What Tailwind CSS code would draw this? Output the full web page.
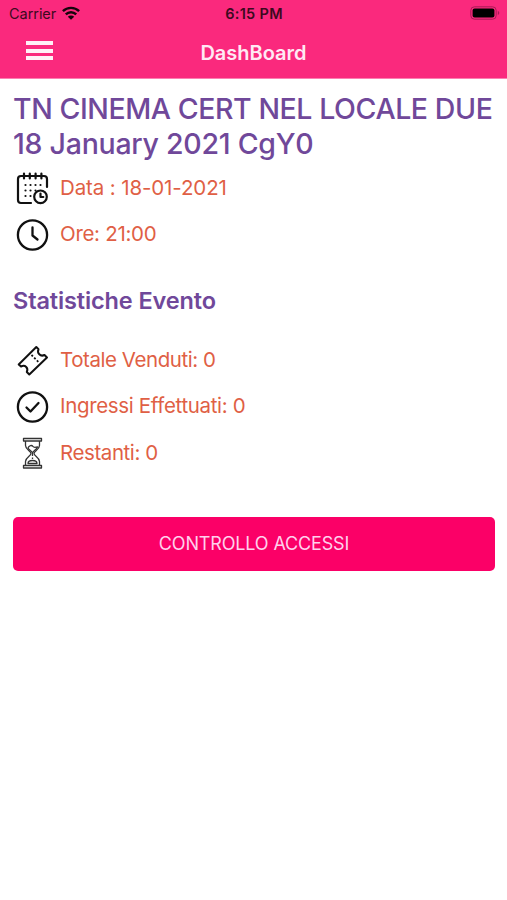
<!DOCTYPE html>
<html lang="it">
<head>
    <meta charset="UTF-8">
    <meta name="viewport" content="width=device-width, initial-scale=1.0">
    <title>DashBoard</title>
    <script src="https://cdn.jsdelivr.net/npm/@tailwindcss/browser@4"></script>
</head>
<body class="bg-white font-['Inter','Liberation_Sans',sans-serif] overflow-hidden">
    <header class="h-[79px] bg-[#fa297d] border-b border-[#fc7fb1]">
        <!-- Status bar -->
        <div class="h-[27px] grid grid-cols-3 items-center pl-[9px] pr-[7px] text-[#3c0a20]">
            <div class="flex items-center gap-1.5">
                <span class="text-[14.5px] tracking-[-0.05px]">Carrier</span>
                <svg class="w-[18px] h-[14px] -mt-0.5" viewBox="0 0 18 14" fill="none" stroke="#16040c" stroke-width="2.4">
                    <path d="M0.9 5.2a11.5 11.5 0 0 1 16.2 0M3.8 8.4a7.3 7.3 0 0 1 10.4 0" />
                    <path d="M9 13.8L5.8 10.8a4.6 4.6 0 0 1 6.4 0z" fill="#16040c" stroke="none" />
                </svg>
            </div>
            <span class="text-center text-[14.5px] tracking-[0.3px] font-semibold -ml-px">6:15 PM</span>
            <svg class="justify-self-end w-[30px] h-[14px] -mt-px" viewBox="0 0 30 14">
                <rect x="0.8" y="0.8" width="25.4" height="12.4" rx="3.6" fill="none" stroke="#a81b56" />
                <rect x="2.6" y="2.6" width="21.8" height="8.8" rx="2" fill="#000" />
                <path d="M27.8 4.8q3 2.2 0 4.4z" fill="#a81b56" />
            </svg>
        </div>
        <div class="h-[51px] grid grid-cols-[60px_1fr_60px] items-center">
            <button class="ml-[26px] w-[27px] flex flex-col gap-[3.5px] -mt-1">
                <span class="h-1 bg-[#fff0f7]"></span>
                <span class="h-1 bg-[#fff0f7]"></span>
                <span class="h-1 bg-[#fff0f7]"></span>
            </button>
            <h1 class="text-center text-[20px] font-semibold text-[#ffe9f4]">DashBoard</h1>
        </div>
    </header>

    <main class="px-[13px] pt-3">
        <h2 class="text-[28.5px] leading-[35px] font-medium text-[#70489a] whitespace-nowrap">
            <span class="block tracking-[-0.42px]">TN CINEMA CERT NEL LOCALE DUE</span>
            <span class="block tracking-[-0.26px]">18 January 2021 CgY0</span>
        </h2>

        <ul class="mt-1 text-[20.5px] text-[#e05f45]">
            <li class="h-[46.5px] flex items-center gap-[11px]">
                <svg class="w-9 h-9" viewBox="0 0 36 36" fill="none" stroke="#111" stroke-width="2.2" stroke-linecap="round" stroke-linejoin="round">
                    <path d="M18 33H8a3 3 0 0 1-3-3V9a3 3 0 0 1 3-3h23a3 3 0 0 1 3 3v8M11 3.500v5M16.800 3.500v5M22.600 3.500v5M28.400 3.500v5" />
                    <path d="M12.500 15h.01M17.500 15h.01M22.500 15h.01M27.500 15h.01M12.500 20.500h.01M17.500 20.500h.01M22.500 20.500h.01M12.500 26h.01M17.500 26h.01" />
                    <circle cx="27.500" cy="26.800" r="6.300" />
                    <path d="M27.500 23.500V27h2.800" />
                </svg>
                <span class="tracking-[-0.12px]">Data : 18-01-2021</span>
            </li>
            <li class="h-[46.5px] flex items-center gap-[11px]">
                <svg class="w-9 h-9" viewBox="0 0 36 36" fill="none" stroke="#111" stroke-width="2.3" stroke-linecap="round" stroke-linejoin="round">
                    <circle cx="19.500" cy="18" r="14.600" />
                    <path d="M19.500 10.500v8l5 4" />
                </svg>
                <span class="tracking-[-0.3px]">Ore: 21:00</span>
            </li>
        </ul>

        <h3 class="mt-[25px] h-[36px] leading-[36px] text-[23.5px] tracking-[-0.12px] font-semibold text-[#70489a]">Statistiche Evento</h3>

        <ul class="mt-[18px] text-[20.5px] text-[#e05f45]">
            <li class="h-[46.5px] flex items-center gap-[11px]">
                <svg class="w-9 h-9" viewBox="0 0 36 36" fill="none" stroke="#111" stroke-width="2" stroke-linejoin="round">
                    <path d="M5.700 22.500L23.300 5L25.500 7.200Q24.200 10.300 26.300 12.300Q28.400 14.500 31.500 13L34 15.500L16.300 32.500L13.800 30Q15.200 27 13.200 25Q11.200 23 8 24.500Z" />
                    <path d="M18.500 13l7 7" stroke-width="1.800" stroke-dasharray="2 1.800" />
                </svg>
                <span class="tracking-[-0.44px]">Totale Venduti: 0</span>
            </li>
            <li class="h-[46.5px] flex items-center gap-[11px]">
                <svg class="w-9 h-9" viewBox="0 0 36 36" fill="none" stroke="#111" stroke-width="2.3" stroke-linecap="round" stroke-linejoin="round">
                    <circle cx="19.500" cy="18" r="14.600" />
                    <path d="M13.500 18.500l4 4 8-8.500" />
                </svg>
                <span class="tracking-[-0.34px]">Ingressi Effettuati: 0</span>
            </li>
            <li class="h-[46.5px] flex items-center gap-[11px]">
                <svg class="w-9 h-9" viewBox="0 0 36 36" fill="none" stroke="#333" stroke-width="1.3" stroke-linejoin="round">
                    <path d="M10.500 3.500h18v2.500h-18zM10.500 30.500h18v2.500h-18z" />
                    <path d="M12.500 6v4.500c0 4 5.500 5.500 5.500 8s-5.500 4-5.500 8v4M26.500 6v4.500c0 4-5.500 5.500-5.500 8s5.500 4 5.500 8v4" />
                    <path d="M15 13c1-3 4-3 5-1.500s3 .5 4.500.5c-1 3-5 4-5 6.500 0-2.500-3.500-3-4.500-5.500zM19.500 19v2M19.500 22.500v1.500" />
                    <path d="M15 28.500c0-4 9-4 9 0z" fill="#fff" />
                </svg>
                <span class="tracking-[-0.42px]">Restanti: 0</span>
            </li>
        </ul>

        <button class="block mt-10 w-[482px] h-[54px] rounded-[5px] bg-[#fb0067] text-[18px] tracking-[-0.15px] text-[#ffd0ec]">CONTROLLO ACCESSI</button>
    </main>
</body>
</html>
